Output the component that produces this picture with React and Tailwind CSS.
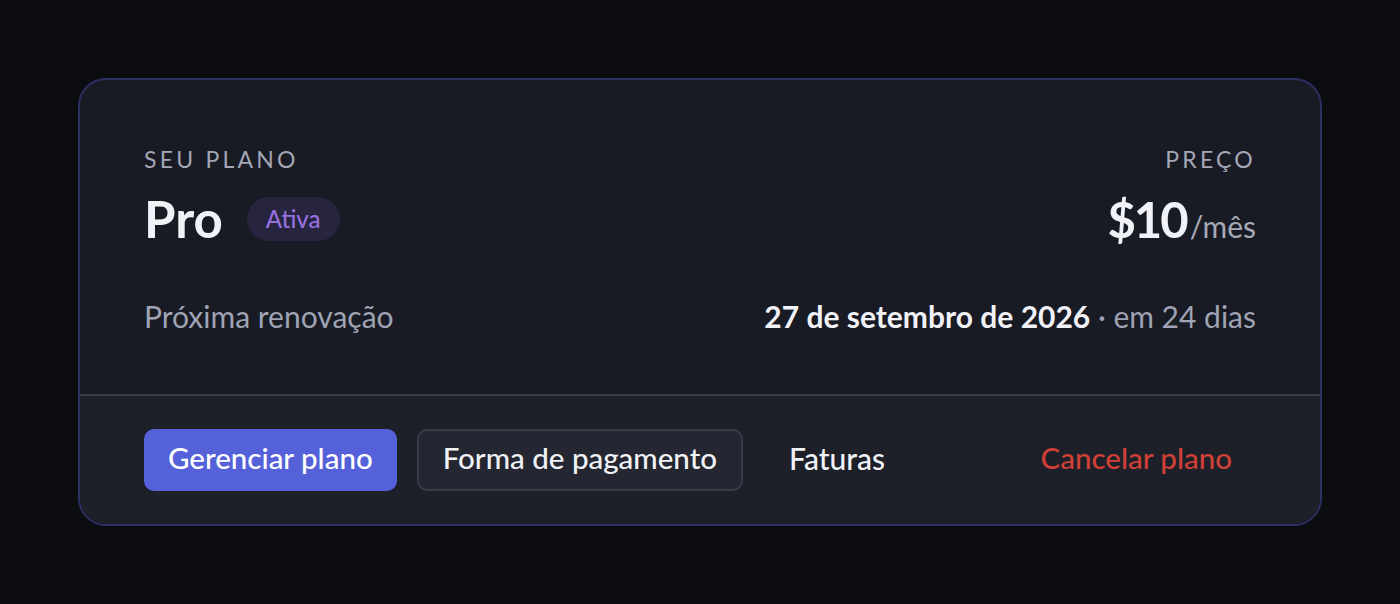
import React from 'react';

// 订阅卡片：当前方案 + 续费信息 + 操作按钮
function PlanCard() {
  return (
    <div className="w-[1244px] rounded-[28px] border-2 border-[#2c3062] bg-[#191b24] overflow-hidden">
      {/* 上半部分：方案与价格 */}
      <div className="px-16 pt-[63px] pb-[58px]">
        <div className="flex items-start justify-between">
          <div>
            <p className="text-[23px] leading-[32px] tracking-[0.14em] text-[#a3a7b6]">SEU PLANO</p>
            <div className="mt-[18px] flex items-center gap-6">
              <span className="text-[51px] leading-[52px] font-bold text-[#f1f2f7]">Pro</span>
              <span className="h-[44px] px-[19px] flex items-center rounded-full bg-[#272440] text-[24px] font-medium text-[#9670de]">
                Ativa
              </span>
            </div>
          </div>
          <div className="flex flex-col items-end">
            <p className="text-[23px] leading-[32px] tracking-[0.14em] text-[#a3a7b6]">PREÇO</p>
            <div className="mt-[18px] flex items-baseline">
              <span className="text-[49px] leading-[52px] font-bold tracking-[-0.04em] text-[#f1f2f7]">$10</span>
              <span className="ml-[3px] text-[30px] text-[#a5a9b8]">/mês</span>
            </div>
          </div>
        </div>

        <div className="mt-[47px] flex items-center justify-between text-[30px] leading-[40px]">
          <span className="text-[#9fa3b3]">Próxima renovação</span>
          <span className="text-[#9fa3b3]">
            <span className="font-bold text-[#f1f2f7]">27 de setembro de 2026</span>
            {' · em 24 dias'}
          </span>
        </div>
      </div>

      {/* 下半部分：操作按钮 */}
      <div className="border-t-2 border-[#363946] bg-[#1d1f29] px-16 py-[33px] flex items-center gap-5">
        <button className="h-[62px] px-6 pb-[4px] rounded-[10px] bg-[#5461d9] text-[29.5px] font-medium text-white">
          Gerenciar plano
        </button>
        <button className="h-[62px] px-6 pb-[4px] rounded-[10px] bg-[#242731] border-2 border-[#393c48] text-[29.5px] font-medium text-[#f1f2f7]">
          Forma de pagamento
        </button>
        <button className="h-[62px] px-6 pb-[4px] ml-[2px] rounded-[10px] text-[30px] font-medium text-[#f1f2f7]">
          Faturas
        </button>
        <button className="ml-auto h-[62px] px-6 pb-[4px] rounded-[10px] text-[29.5px] font-medium text-[#cf4136]">
          Cancelar plano
        </button>
      </div>
    </div>
  );
}

export default function App() {
  return (
    <div
      className="w-[1400px] h-[604px] bg-[#0c0d11] flex items-center justify-center"
      style={{ fontFamily: 'Lato, "Noto Sans", sans-serif' }}
    >
      <PlanCard />
    </div>
  );
}
